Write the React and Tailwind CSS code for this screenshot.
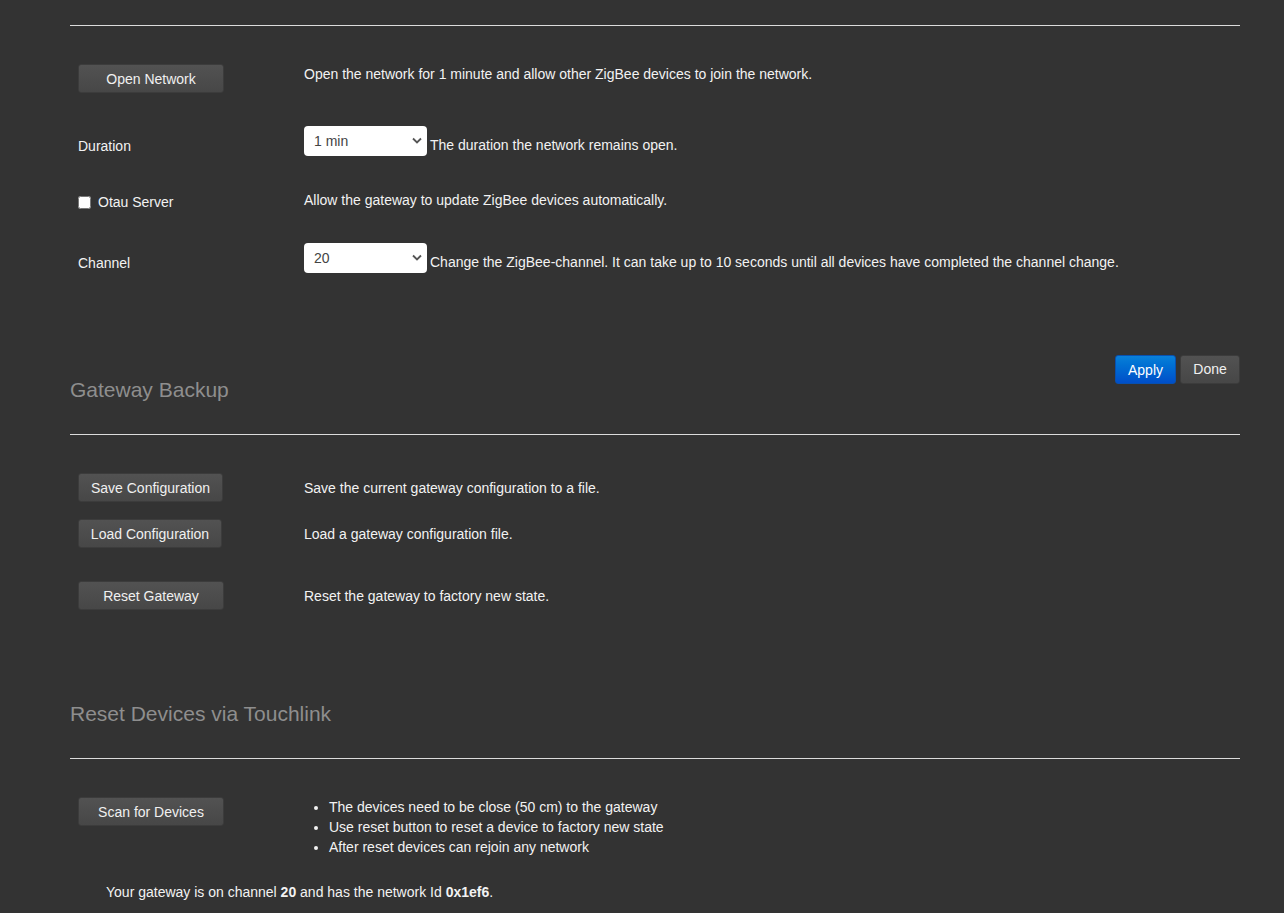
import React from "react";

const Btn = ({ children, w }) => (
  <button
    className={`h-[29px] ${w} shrink-0 rounded-[3px] border border-[#3c3c3c] bg-gradient-to-b from-[#525252] to-[#474747] text-[14px] text-[#f0f0f0] leading-none`}
  >
    {children}
  </button>
);

const Select = ({ value }) => (
  <div className="relative w-[123px] h-[30px] shrink-0">
    <select
      defaultValue={value}
      className="appearance-none w-full h-full rounded-[4px] bg-white pl-[10px] text-[14px] text-[#444] outline-none"
    >
      <option>{value}</option>
    </select>
    <svg
      className="absolute right-[5px] top-[11px] pointer-events-none"
      width="10"
      height="7"
      viewBox="0 0 10 7"
    >
      <path d="M1 1.5 L5 5.5 L9 1.5" fill="none" stroke="#555" strokeWidth="1.8" />
    </svg>
  </div>
);

const Hr = () => <div className="h-px bg-[#dcdcdc]" />;

export default function App() {
  return (
    <div
      className="min-h-[913px] bg-[#333333] text-[14px] text-[#f2f2f2] pl-[70px] pt-[25px]"
      style={{ fontFamily: '"Liberation Sans", Arial, sans-serif' }}
    >
      <div className="w-[1170px]">
        <Hr />

        <div className="pl-[8px]">
          {/* Open Network */}
          <div className="flex items-start mt-[38px]">
            <div className="w-[226px]">
              <Btn w="w-[146px]">Open Network</Btn>
            </div>
            <div className="leading-[20px]">
              Open the network for 1 minute and allow other ZigBee devices to join the network.
            </div>
          </div>

          {/* Duration */}
          <div className="flex items-end mt-[33px]">
            <div className="w-[226px] leading-[20px]">Duration</div>
            <div className="flex items-end">
              <Select value="1 min" />
              <span className="leading-[20px] ml-[3px] mb-px">
                The duration the network remains open.
              </span>
            </div>
          </div>

          {/* Otau */}
          <div className="flex items-start mt-[34px]">
            <div className="w-[226px] flex items-center leading-[20px] pt-[2px]">
              <input type="checkbox" className="w-[13px] h-[13px] m-0 mr-[7px]" />
              Otau Server
            </div>
            <div className="leading-[20px]">
              Allow the gateway to update ZigBee devices automatically.
            </div>
          </div>

          {/* Channel */}
          <div className="flex items-end mt-[31px]">
            <div className="w-[226px] leading-[20px]">Channel</div>
            <div className="flex items-end">
              <Select value="20" />
              <span className="leading-[20px] ml-[3px] mb-px">
                Change the ZigBee-channel. It can take up to 10 seconds until all devices have
                completed the channel change.
              </span>
            </div>
          </div>
        </div>

        {/* Apply / Done */}
        <div className="flex justify-end gap-[4px] mt-[82px]">
          <button className="h-[29px] w-[61px] pt-px rounded-[3px] border border-[#0850b0] bg-gradient-to-b from-[#0a80d8] to-[#004ec9] text-[14px] text-white">
            Apply
          </button>
          <button className="h-[29px] w-[60px] rounded-[3px] border border-[#3c3c3c] bg-gradient-to-b from-[#525252] to-[#474747] text-[14px] text-[#f0f0f0]">
            Done
          </button>
        </div>

        <h2 className="-mt-[5px] text-[21px] leading-[22px] text-[#8e8e8e]">Gateway Backup</h2>
        <div className="mt-[33px]">
          <Hr />
        </div>

        <div className="pl-[8px]">
          <div className="flex items-center mt-[38px]">
            <div className="w-[226px]">
              <Btn w="w-[145px]">Save Configuration</Btn>
            </div>
            <div className="leading-[20px]">Save the current gateway configuration to a file.</div>
          </div>
          <div className="flex items-center mt-[17px]">
            <div className="w-[226px]">
              <Btn w="w-[144px]">Load Configuration</Btn>
            </div>
            <div className="leading-[20px]">Load a gateway configuration file.</div>
          </div>
          <div className="flex items-center mt-[33px]">
            <div className="w-[226px]">
              <Btn w="w-[146px]">Reset Gateway</Btn>
            </div>
            <div className="leading-[20px]">Reset the gateway to factory new state.</div>
          </div>
        </div>

        <h2 className="mt-[93px] text-[21px] leading-[22px] text-[#8e8e8e]">
          Reset Devices via Touchlink
        </h2>
        <div className="mt-[33px]">
          <Hr />
        </div>

        <div className="pl-[8px]">
          <div className="flex items-start mt-[38px]">
            <div className="w-[226px]">
              <Btn w="w-[146px]">Scan for Devices</Btn>
            </div>
            <ul className="list-disc pl-[25px] leading-[20px]">
              <li>The devices need to be close (50 cm) to the gateway</li>
              <li>Use reset button to reset a device to factory new state</li>
              <li>After reset devices can rejoin any network</li>
            </ul>
          </div>
          <p className="mt-[25px] pl-[28px] leading-[20px]">
            Your gateway is on channel <b>20</b> and has the network Id <b>0x1ef6</b>.
          </p>
        </div>
      </div>
    </div>
  );
}
